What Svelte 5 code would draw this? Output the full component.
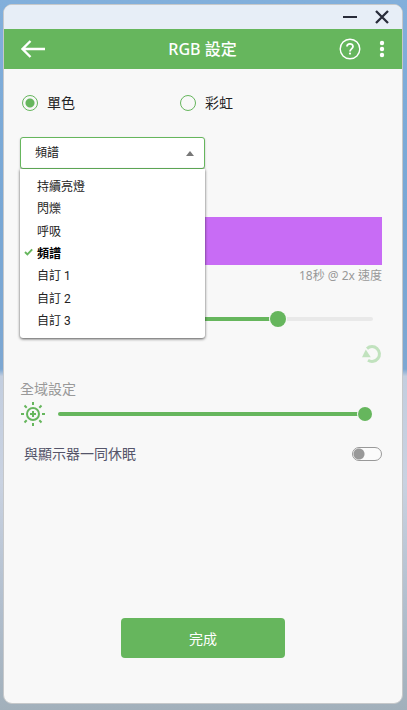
<script>
  const modes = ['持續亮燈', '閃爍', '呼吸', '頻譜', '自訂 1', '自訂 2', '自訂 3'];
  let mode = $state('頻譜');
  let kind = $state('single');
  let open = $state(true);
  let speed = $state(71);
  let brightness = $state(100);
  let sleep = $state(false);

  function choose(name) {
    mode = name;
    open = false;
  }
  function toggleMenu(event) {
    event.preventDefault();
    open = !open;
  }
</script>

<div class="desktop">
  <main class="window">
    <div class="titlebar">
      <button class="icon" aria-label="最小化">
        <svg width="16" height="16" viewBox="0 0 16 16"><path d="M1 8h14" stroke="#282c3a" stroke-width="2" /></svg>
      </button>
      <button class="icon" aria-label="關閉">
        <svg width="16" height="16" viewBox="0 0 16 16"><path d="M2 2l12 12M14 2L2 14" stroke="#282c3a" stroke-width="2.3" /></svg>
      </button>
    </div>

    <header>
      <button class="icon" aria-label="返回">
        <svg width="26" height="20" viewBox="0 0 26 20" fill="none" stroke="#fff" stroke-width="2.4"><path d="M25 10H3M10.5 2L2.5 10l8 8" /></svg>
      </button>
      <h1>RGB 設定</h1>
      <div class="tools">
        <button class="icon" aria-label="說明">
          <svg width="22" height="22" viewBox="0 0 22 22" fill="none" stroke="#fff">
            <circle cx="11" cy="11" r="9.8" stroke-width="1.4" />
            <path d="M8 8.6C8 5 14 5 14 8.5c0 2.3-3 2.4-3 5" stroke-width="1.8" />
            <circle cx="11" cy="15.6" r="1.1" fill="#fff" stroke="none" />
          </svg>
        </button>
        <button class="icon" aria-label="更多">
          <svg width="6" height="18" viewBox="0 0 6 18" fill="#fff"><circle cx="3" cy="3" r="2.2" /><circle cx="3" cy="9" r="2.2" /><circle cx="3" cy="15" r="2.2" /></svg>
        </button>
      </div>
    </header>

    <div class="content">
      <div class="kinds">
        <label><input type="radio" name="kind" value="single" bind:group={kind} />單色</label>
        <label><input type="radio" name="kind" value="rainbow" bind:group={kind} />彩虹</label>
      </div>

      <div class="picker">
        <select aria-label="燈效" bind:value={mode} onmousedown={toggleMenu}>
          {#each modes as name}<option value={name}>{name}</option>{/each}
        </select>
        <svg class="caret" width="8" height="5" viewBox="0 0 8 5"><path d="M0 5L4 0l4 5z" fill="#777" /></svg>
        {#if open}
          <div class="menu">
            {#each modes as name}
              <button class:selected={name === mode} onclick={() => choose(name)}>
                <span class="mark">
                  {#if name === mode}
                    <svg width="9" height="8" viewBox="0 0 9 8"><path d="M1 4l2.4 2.4L8.2 1.4" fill="none" stroke="#66b65d" stroke-width="1.9" /></svg>
                  {/if}
                </span>{name}
              </button>
            {/each}
          </div>
        {/if}
      </div>

      <div class="swatch"></div>
      <p class="timing">18秒 @ 2x 速度</p>

      <div class="slider speed">
        <input type="range" aria-label="速度" min="0" max="100" bind:value={speed} style:--value={speed / 100} />
      </div>

      <div class="reset">
        <button class="icon" aria-label="重設">
          <svg width="20" height="20" viewBox="0 0 20 20">
            <path d="M5 4.6A7.4 7.4 0 1 1 6 16.2" fill="none" stroke="#c1e2be" stroke-width="3" />
            <path d="M0 13.2L3.8 5.6l5 7.6z" fill="#c1e2be" />
          </svg>
        </button>
      </div>

      <h2>全域設定</h2>
      <div class="slider bright">
        <svg width="26" height="26" viewBox="0 0 26 26" fill="none" stroke="#66b65d" stroke-width="2">
          <circle cx="13" cy="13" r="6" />
          <path d="M10 13h6M13 10v6M13 1v3M13 22v3M1 13h3M22 13h3M4.5 4.5l2.2 2.2M19.3 19.3l2.2 2.2M21.5 4.5l-2.2 2.2M6.7 19.3l-2.2 2.2" />
        </svg>
        <input type="range" aria-label="亮度" min="0" max="100" bind:value={brightness} style:--value={brightness / 100} />
      </div>

      <label class="sleep">與顯示器一同休眠<input type="checkbox" bind:checked={sleep} /></label>
    </div>

    <footer>
      <button class="done">完成</button>
    </footer>
  </main>
</div>

<style>
  :global(body) {
    margin: 0;
  }
  .desktop,
  .desktop * {
    box-sizing: border-box;
  }
  .desktop {
    min-height: 100vh;
    display: flex;
    padding: 4px 4px 6px 3px;
    background: linear-gradient(#82afdb 0, #78a7d5 30%, #7da7d2 52%, #c3cedf 53%, #c9d2e1 68%, #b2bfce 85%, #a2b0bb 100%);
    font-family: 'Noto Sans', 'Noto Sans CJK TC', sans-serif;
    font-size: 14px;
    color: #222;
  }
  .window {
    flex: 1;
    display: flex;
    flex-direction: column;
    border: 1px solid #c6c8ca;
    border-radius: 9px;
    background: #f8f8f8;
    overflow: hidden;
  }
  button,
  input,
  select {
    font: inherit;
    margin: 0;
  }
  .icon {
    display: flex;
    padding: 0;
    border: 0;
    background: none;
  }
  .titlebar {
    height: 24px;
    display: flex;
    justify-content: flex-end;
    align-items: center;
    gap: 16px;
    padding: 0 12px;
    background: #e7eef7;
  }
  header {
    height: 40px;
    display: grid;
    grid-template-columns: 1fr auto 1fr;
    align-items: center;
    padding: 0 17px 0 16px;
    background: #66b65d;
    color: #fff;
  }
  h1 {
    margin: 0;
    font-size: 16px;
    line-height: 24px;
    font-weight: 500;
  }
  .tools {
    display: flex;
    align-items: center;
    justify-content: flex-end;
    gap: 18px;
  }
  .content {
    flex: 1;
    display: flex;
    flex-direction: column;
    padding: 24px 20px 24px 16px;
  }
  .kinds {
    display: flex;
  }
  .kinds label {
    width: 158px;
    display: flex;
    align-items: center;
    gap: 9px;
    padding-left: 2px;
    line-height: 20px;
  }
  input {
    appearance: none;
  }
  input[type='radio'] {
    width: 16px;
    height: 16px;
    border: 1px solid #66b65d;
    border-radius: 50%;
  }
  input[type='radio']:checked {
    background: radial-gradient(circle, #66b65d 4px, transparent 5px);
  }
  .picker {
    position: relative;
    width: 185px;
    margin-top: 24px;
    font-family: Roboto, 'Noto Sans CJK TC', sans-serif;
    font-size: 12px;
  }
  select {
    appearance: none;
    display: block;
    width: 100%;
    height: 32px;
    padding: 0 14px;
    border: 1px solid #66b65d;
    border-radius: 3px;
    background: #fff;
    color: #222;
    outline: 0;
    box-shadow: 0 1px 2px #0004;
  }
  .caret {
    position: absolute;
    right: 11px;
    top: 14px;
  }
  .menu {
    position: absolute;
    z-index: 1;
    top: 100%;
    left: 0;
    width: 100%;
    height: 169px;
    display: flex;
    flex-direction: column;
    padding: 5px 0 7px;
    border-radius: 0 0 3px 3px;
    background: #fff;
    box-shadow: 0 1px 3px #000a;
  }
  .menu button {
    flex: 1;
    display: flex;
    align-items: center;
    padding: 0 0 0 4px;
    border: 0;
    background: none;
    color: #222;
  }
  .menu .selected {
    font-weight: 700;
    color: #000;
  }
  .mark {
    width: 13px;
    display: flex;
  }
  .swatch {
    height: 48px;
    margin-top: 48px;
    background: #c86cf5;
  }
  .timing {
    margin: 0;
    text-align: right;
    font-size: 12px;
    line-height: 22px;
    color: #999;
  }
  .slider {
    display: flex;
    align-items: center;
  }
  .slider input {
    --knob: 14px;
    --track: #e9e9e9;
    flex: 1;
    min-width: 0;
    height: 16px;
    background: none;
  }
  .slider input::-webkit-slider-runnable-track {
    height: 4px;
    border-radius: 2px;
    background: linear-gradient(90deg, #66b65d calc(var(--value) * 100%), var(--track) 0);
  }
  .slider input::-webkit-slider-thumb {
    appearance: none;
    width: var(--knob);
    height: var(--knob);
    margin-top: calc((4px - var(--knob)) / 2);
    border-radius: 50%;
    background: #66b65d;
    box-shadow: 0 0 0 1px #f8f8f8;
  }
  .speed {
    margin: 24px 9px 0 38px;
  }
  .speed input {
    --knob: 16px;
  }
  .reset {
    display: flex;
    justify-content: flex-end;
    margin-top: 17px;
  }
  h2 {
    margin: 14px 0 0;
    font-size: 14px;
    line-height: 22px;
    font-weight: 400;
    color: #999;
  }
  .bright {
    gap: 12px;
    margin: 1px 10px 0 0;
  }
  .sleep {
    display: flex;
    justify-content: space-between;
    align-items: center;
    margin-top: 16px;
    padding-left: 4px;
    line-height: 22px;
    color: #55556a;
  }
  .sleep input {
    width: 30px;
    height: 14px;
    border: 1px solid #999;
    border-radius: 7px;
    background: radial-gradient(circle at 6px 6px, #999 5px, #fff0 6px) #fbfbfb;
  }
  .sleep input:checked {
    border-color: #66b65d;
    background: radial-gradient(circle at 22px 6px, #fff 5px, #fff0 6px) #66b65d;
  }
  footer {
    display: flex;
    justify-content: center;
    padding-bottom: 45px;
  }
  .done {
    width: 164px;
    height: 40px;
    border: 0;
    border-radius: 4px;
    background: #66b65d;
    color: #fff;
  }
</style>
